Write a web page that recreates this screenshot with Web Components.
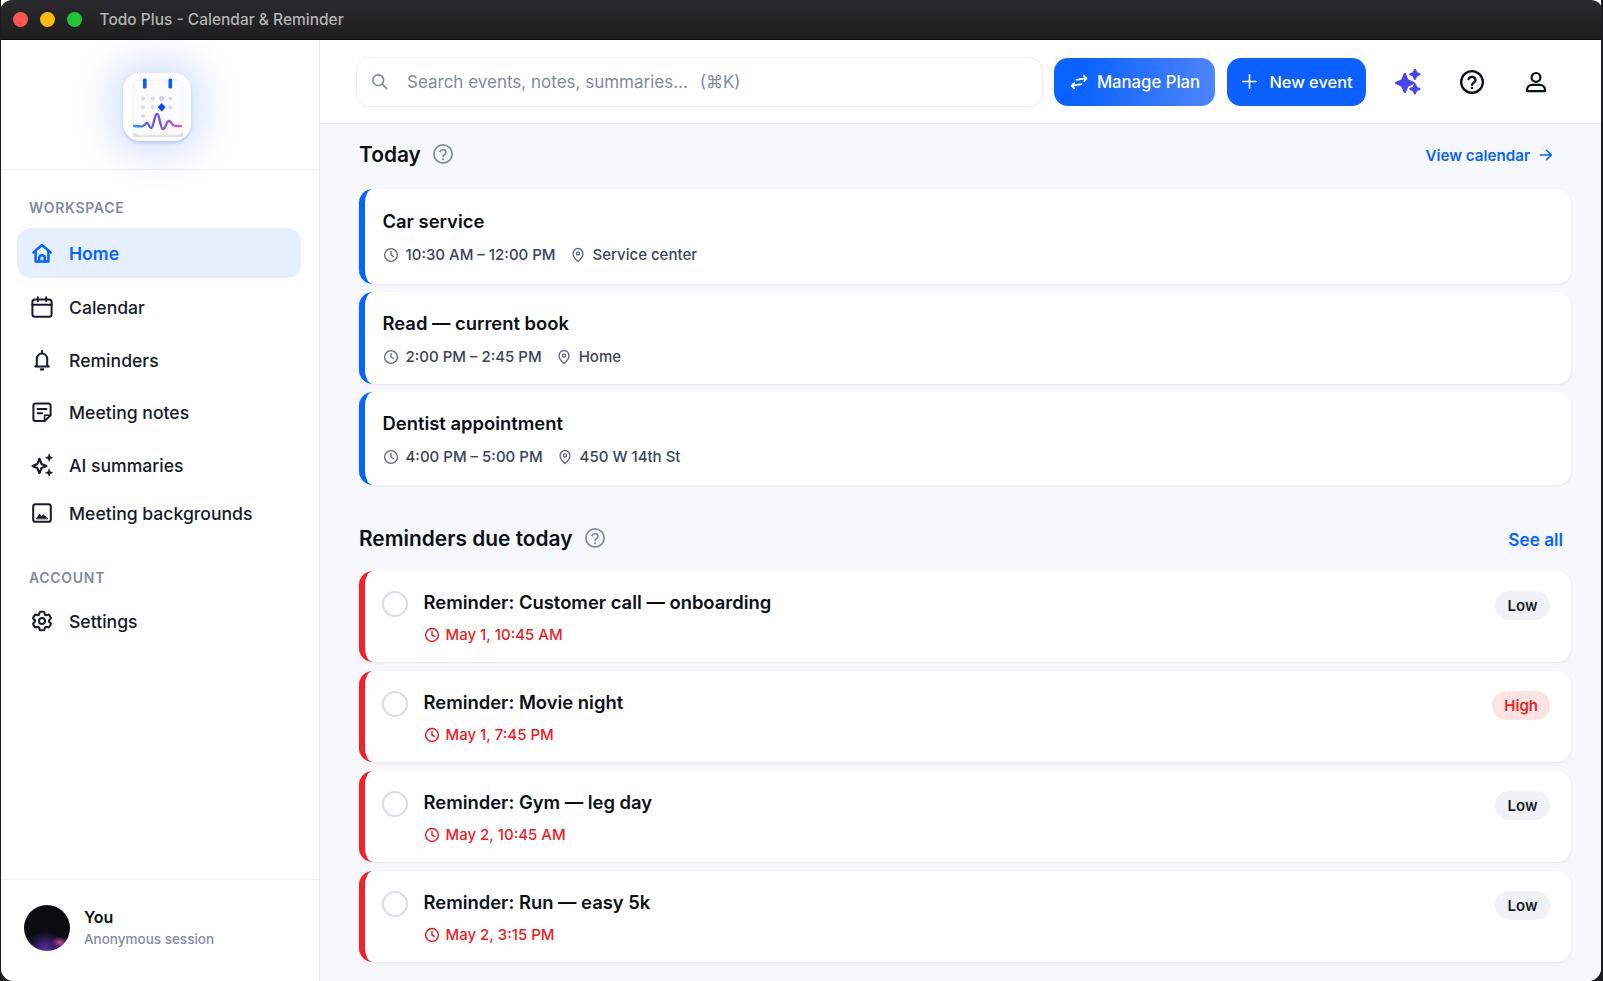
<!DOCTYPE html>
<html><head><meta charset="utf-8"><title>Todo Plus</title>
<style>
html,body{margin:0;padding:0;background:#1c1c1e;height:981px;overflow:hidden}
body{font-family:Inter,"Liberation Sans",sans-serif;-webkit-font-smoothing:antialiased}
</style></head><body>
<app-window>
  <title-bar slot="title">Todo Plus - Calendar &amp; Reminder</title-bar>
  <side-bar slot="side">
    <nav-label style="margin-top:29px">WORKSPACE</nav-label>
    <nav-item icon="home" active style="margin-top:11px">Home</nav-item>
    <nav-item icon="calendar" style="margin-top:5px">Calendar</nav-item>
    <nav-item icon="bell" style="margin-top:5px">Reminders</nav-item>
    <nav-item icon="note" style="margin-top:4px">Meeting notes</nav-item>
    <nav-item icon="spark" style="margin-top:5px">AI summaries</nav-item>
    <nav-item icon="image">Meeting backgrounds</nav-item>
    <nav-label style="margin-top:32px">ACCOUNT</nav-label>
    <nav-item icon="gear" style="margin-top:10px">Settings</nav-item>
  </side-bar>
  <top-bar slot="top"></top-bar>
  <main-content slot="main">
    <section-head link="View calendar" arrow style="margin-top:15px">Today</section-head>
    <event-card time="10:30 AM – 12:00 PM" place="Service center" style="margin-top:20px;height:95px;--p:20px">Car service</event-card>
    <event-card time="2:00 PM – 2:45 PM" place="Home" style="margin-top:8px;height:92px;--p:19px">Read — current book</event-card>
    <event-card time="4:00 PM – 5:00 PM" place="450 W 14th St" style="margin-top:8px;height:93px;--p:19px">Dentist appointment</event-card>
    <section-head link="See all" style="margin-top:38px">Reminders due today</section-head>
    <reminder-card when="May 1, 10:45 AM" level="Low" style="margin-top:18px">Reminder: Customer call — onboarding</reminder-card>
    <reminder-card when="May 1, 7:45 PM" level="High" style="margin-top:9px">Reminder: Movie night</reminder-card>
    <reminder-card when="May 2, 10:45 AM" level="Low" style="margin-top:9px">Reminder: Gym — leg day</reminder-card>
    <reminder-card when="May 2, 3:15 PM" level="Low" style="margin-top:9px">Reminder: Run — easy 5k</reminder-card>
  </main-content>
</app-window>
<script>
const ICONS={
home:'<g stroke-width="2.5"><path d="M3.4 11.4 12 4l8.6 7.4"/><path d="M5.6 9.8V20.4h12.8V9.8"/><path d="M9.2 20.4v-3.4a2.8 2.8 0 0 1 5.6 0v3.4"/></g>',
calendar:'<rect x="2.4" y="4.4" width="19.2" height="17.4" rx="2.6"/><path d="M2.4 9.8h19.2M7.8 2.2v4M16.2 2.2v4"/>',
bell:'<path d="M6.8 17.2v-6.4a5.2 5.2 0 0 1 10.4 0v6.4l1.6 1.4H5.2z"/><path d="M12 2.8v2.2"/><path d="M11 21.4h2" stroke-width="2.4"/>',
note:'<path d="M5.6 3.4h12.8a2.2 2.2 0 0 1 2.2 2.2v9.6l-6 5.8H5.6a2.2 2.2 0 0 1-2.2-2.2V5.6a2.2 2.2 0 0 1 2.2-2.2z"/><path d="M7.6 9h8.8M7.6 13.2h4.6"/><path d="M14.6 21v-5.8h6" stroke-width="1.6"/>',
spark:'<g transform="translate(-1 -1.2) scale(1.1)"><path d="M9.5 6.4 11.4 11l4.4 1.9-4.4 1.9-1.9 4.6-1.9-4.6-4.4-1.9L7.6 11z"/><path d="M18.3 2.2l.9 2.3 2.3.9-2.3.9-.9 2.3-.9-2.3-2.3-.9 2.3-.9zM18.3 15.8l.9 2.3 2.3.9-2.3.9-.9 2.3-.9-2.3-2.3-.9 2.3-.9z" fill="currentColor" stroke-width=".6"/></g>',
image:'<rect x="3.2" y="3.2" width="17.6" height="17.6" rx="2.4"/><path d="M6.4 17.6l3.2-4.4 2.2 2.4 1.6-1.8 4.2 3.8z" fill="currentColor" stroke-width=".8"/>',
gear:'<path transform="translate(-.4 -.4) scale(1.033)" d="M9.594 3.94c.09-.542.56-.94 1.11-.94h2.593c.55 0 1.02.398 1.11.94l.213 1.281c.063.374.313.686.645.87.074.04.147.083.22.127.325.196.72.257 1.075.124l1.217-.456a1.125 1.125 0 0 1 1.37.49l1.296 2.247a1.125 1.125 0 0 1-.26 1.431l-1.003.827c-.293.241-.438.613-.43.992a7.723 7.723 0 0 1 0 .255c-.008.378.137.75.43.991l1.004.827c.424.35.534.955.26 1.43l-1.298 2.247a1.125 1.125 0 0 1-1.369.491l-1.217-.456c-.355-.133-.75-.072-1.076.124a6.47 6.47 0 0 1-.22.128c-.331.183-.581.495-.644.869l-.213 1.281c-.09.543-.56.94-1.11.94h-2.594c-.55 0-1.019-.398-1.11-.94l-.213-1.281c-.062-.374-.312-.686-.644-.87a6.52 6.52 0 0 1-.22-.127c-.325-.196-.72-.257-1.076-.124l-1.217.456a1.125 1.125 0 0 1-1.369-.49l-1.297-2.247a1.125 1.125 0 0 1 .26-1.431l1.004-.827c.292-.24.437-.613.43-.991a6.932 6.932 0 0 1 0-.255c.007-.38-.138-.751-.43-.992l-1.004-.827a1.125 1.125 0 0 1-.26-1.43l1.297-2.247a1.125 1.125 0 0 1 1.37-.491l1.216.456c.356.133.751.072 1.076-.124.072-.044.146-.086.22-.128.332-.183.582-.495.644-.869l.214-1.28Z"/><circle cx="12" cy="12" r="3"/>',
help:'<circle cx="12" cy="12" r="10"/><path d="M8.8 9.4a3.3 3.3 0 0 1 6.4.9c0 2.2-3.2 2.6-3.2 4.4"/><circle cx="12" cy="17.6" r="1.1" fill="currentColor" stroke="none"/>',
clock:'<circle cx="12" cy="12" r="9.6"/><path d="M12 6.6V12l3.6 2.2"/>',
pin:'<path d="M12 21.8s7.4-6.6 7.4-12.2a7.4 7.4 0 0 0-14.8 0c0 5.6 7.4 12.2 7.4 12.2z"/><circle cx="12" cy="9.6" r="2.4"/>',
search:'<circle cx="10.4" cy="10.4" r="6.8"/><path d="M15.6 15.6 21 21"/>',
user:'<circle cx="12" cy="7.4" r="4.4"/><path d="M8 14.8h8a5 5 0 0 1 5 5v1.4H3v-1.4a5 5 0 0 1 5-5z"/>',
swap:'<path d="M9 9.4 21 7.4M17.6 4.4 21 7.4l-2.6 3.4M15 14.6 3 16.6M6.4 13.2 3 16.6l3.4 3"/>',
plus:'<path d="M12 3.6v16.8M3.6 12h16.8"/>',
arrow:'<path d="M3.6 12h16.4M13 5l7 7-7 7"/>',
magic:'<path d="M9.6 5.2 12 11l5.4 2.4L12 15.8l-2.4 5.6-2.4-5.6-5.4-2.4L7.2 11z" fill="currentColor"/><path d="M18.6 1.6l1.2 2.9 2.8 1.1-2.8 1.2-1.2 2.8-1.1-2.8-2.9-1.2 2.9-1.1zM18.6 14.6l1.2 2.9 2.8 1.1-2.8 1.2-1.2 2.8-1.1-2.8-2.9-1.2 2.9-1.1z" fill="currentColor"/>'
};
function def(name,css,html){
  customElements.define(name,class extends HTMLElement{
    connectedCallback(){
      if(this.shadowRoot)return;
      const r=this.attachShadow({mode:'open'});
      const a=n=>this.getAttribute(n)||'';
      r.innerHTML='<style>'+css+'</style>'+(typeof html==='function'?html(a,this):html);
    }
  });
}
def('ui-icon',
 ':host{display:inline-flex;flex:none;width:var(--s,20px);height:var(--s,20px);color:inherit}svg{width:100%;height:100%;display:block;fill:none;stroke:currentColor;stroke-width:var(--w,2);stroke-linecap:round;stroke-linejoin:round}',
 a=>`<svg viewBox="0 0 24 24">${ICONS[a('name')]||''}</svg>`);
def('app-window',
 `:host{display:grid;grid-template-columns:319px 1fr;grid-template-rows:40px 84px 1fr;width:1600px;margin-left:1px;height:981px;background:#fff;border-radius:0 0 13px 13px;overflow:hidden;position:relative;grid-template-areas:"t t" "s b" "s m"}
 ::slotted([slot=title]){grid-area:t}::slotted([slot=side]){grid-area:s}::slotted([slot=top]){grid-area:b}::slotted([slot=main]){grid-area:m}`,
 '<slot name="title"></slot><slot name="side"></slot><slot name="top"></slot><slot name="main"></slot>');
def('title-bar',
 `:host{display:flex;align-items:center;background:linear-gradient(#2a2a2c,#1e1e1f);color:#b4b4b4;font:500 15.5px Inter,sans-serif;margin-left:-1px;margin-right:-2px;border-bottom:1px solid #101010;box-sizing:border-box;border-radius:12px 12px 0 0}
 .l{display:flex;gap:12px;margin:0 18px 0 12.5px}.l i{width:15px;height:15px;border-radius:50%;display:block}`,
 '<div class="l"><i style="background:#ff5450"></i><i style="background:#fdbb0e"></i><i style="background:#1fc636"></i></div><slot></slot>');
def('app-logo',
 `:host{display:block;width:68px;height:68px;border-radius:17px;background:#fff;box-shadow:0 0 36px 12px rgba(70,120,255,.22),0 2px 3px rgba(60,90,200,.25)}svg{display:block;width:100%;height:100%}`,
 `<svg viewBox="0 0 68 68"><defs><linearGradient id="w" x1="0" x2="1"><stop offset="0" stop-color="#2f8cff"/><stop offset=".5" stop-color="#6d52d8"/><stop offset="1" stop-color="#d95bb5"/></linearGradient></defs>
 <rect x="10" y="59" width="50" height="5" rx="2.5" fill="#dedee6"/><rect x="10" y="7" width="50" height="55" rx="6" fill="#fbfbfd" stroke="#eeeef4" stroke-width=".8"/>
 <rect x="20" y="5.5" width="3.6" height="10" rx="1.2" fill="#0b5cf5"/><rect x="45.5" y="5.5" width="3.6" height="10" rx="1.2" fill="#0b5cf5"/>
 <g fill="#dcdce8"><circle cx="20" cy="25.6" r="2.1"/><circle cx="29.6" cy="25.6" r="2.1"/><circle cx="38.7" cy="25.6" r="2.6" fill="#d5d0e6"/><circle cx="47.3" cy="25.6" r="2.1"/><circle cx="20" cy="34.3" r="2.1"/><circle cx="29.6" cy="34.3" r="2.1"/><circle cx="47.3" cy="34.3" r="2.1" fill="#d5daf5"/><circle cx="20" cy="43" r="2.1"/></g>
 <path d="M38.7 31l3 3.3-3 3.3-3-3.3z" fill="#0b4fe8" stroke="#0b4fe8" stroke-width="1.4" stroke-linejoin="round"/>
 <path d="M11 53C15 53 18 54 20 53C22 52 23 50 24 50C26 50 26 55 28 55C31 55 31 41 34 41C37 41 37 56 40 56C43 56 43 48 46 48C48.5 48 49 53 52 53L58 53" fill="none" stroke="url(#w)" stroke-width="2.3" stroke-linecap="round" stroke-linejoin="round"/></svg>`);
def('side-bar',
 `:host{display:flex;flex-direction:column;background:#fff;border-right:1px solid #eceef5;box-sizing:border-box;min-height:0}
 .h{height:130px;box-sizing:border-box;padding-top:33px;border-bottom:1px solid #eef0f5;display:flex;justify-content:center;flex:none;padding-right:7px}
 .n{flex:1;display:flex;flex-direction:column;padding:0 18px 0 16px}
 .f{height:102px;box-sizing:border-box;border-top:1px solid #eef0f6;display:flex;align-items:flex-start;padding:25px 0 0 23px;gap:14px}
 .a{width:46px;height:46px;border-radius:50%;background:radial-gradient(ellipse 9px 6px at 78% 82%,#d0507a 0,rgba(130,50,140,.7) 55%,transparent 100%),radial-gradient(circle at 46% 100%,#5a31b0 0,transparent 38%),#0c0b12}
 .t{display:flex;flex-direction:column;padding-top:2px}.y{font:600 16px/20px Inter,sans-serif;color:#0b0f17}.s{font:500 13.5px/20px Inter,sans-serif;color:#7f8ba8;margin-top:2px}`,
 `<div class="h"><app-logo></app-logo></div><div class="n"><slot></slot></div><div class="f"><div class="a"></div><div class="t"><span class="y">You</span><span class="s">Anonymous session</span></div></div>`);
def('nav-label',
 ':host{display:block;font:600 14px/18px Inter,sans-serif;letter-spacing:.7px;color:#7f8ba3;padding-left:12px}','<slot></slot>');
def('nav-item',
 `:host{display:flex;align-items:center;height:48px;flex:none;border-radius:14px;padding-left:13px;gap:15px;color:#141b29;font:500 17.6px Inter,sans-serif;--s:24px}
 :host([active]){height:50px;background:#e6effd;color:#0b63ff;font-weight:600}`,
 a=>`<ui-icon name="${a('icon')}"></ui-icon><slot></slot>`);
def('top-bar',
 `:host{display:flex;align-items:center;background:#fff;border-bottom:1px solid #e9ecf3;box-sizing:border-box;padding:0 0 0 36px;--s:22px}
 .s{width:687px;height:50px;box-sizing:border-box;border:1px solid #eceef4;border-radius:14px;display:flex;align-items:center;padding-left:13px;gap:18px;color:#7f8ba3;font:400 17px Inter,sans-serif;--s:19px;box-shadow:0 1px 2px rgba(30,40,80,.03)}
 button{border:0;height:48px;border-radius:14px;color:#fff;font:500 16.7px Inter,sans-serif;display:flex;align-items:center;padding:0;margin:0;justify-content:center}
 .m{width:161px;margin-left:11px;background:linear-gradient(100deg,#0b63ff 20%,#4f86fa);--s:20px;gap:8px}.n{width:139px;margin-left:12px;background:#0b60ff;--s:19px;gap:10px;font-size:16.4px}
 .i{display:flex;justify-content:center;flex:none;width:64px}
 .k{margin-left:7px}`,
 `<div class="s"><ui-icon name="search"></ui-icon><span>Search events, notes, summaries...<span class="k"> (⌘K)</span></span></div>
 <button class="m"><ui-icon name="swap"></ui-icon>Manage Plan</button><button class="n"><ui-icon name="plus"></ui-icon>New event</button>
 <div class="i" style="margin-left:9px;width:65px;color:#4a45ee;--s:27px"><ui-icon name="magic"></ui-icon></div>
 <div class="i" style="color:#0b0f17;--s:26px;--w:2.1"><ui-icon name="help"></ui-icon></div>
 <div class="i" style="color:#0b0f17;--s:24px;--w:2.2"><ui-icon name="user"></ui-icon></div>`);
def('main-content',
 ':host{display:flex;flex-direction:column;background:#f7f8fb;padding:0 30px 0 39px;min-height:0;overflow:hidden}','<slot></slot>');
def('section-head',
 `:host{display:flex;align-items:center;height:30px;flex:none;font:600 20.9px Inter,sans-serif;color:#0b0f17}
 .q{margin-left:11px;color:#7f8ba3;--s:22px;--w:1.9;display:flex}.l{margin-left:auto;margin-right:8px;padding-top:2px;color:#0b63ff;font:600 17.2px Inter,sans-serif;display:flex;align-items:center;gap:9px;--s:16px;--w:2.4}
 :host([arrow]) .l{margin-right:17px;padding-top:2px;font-size:15.2px;gap:8px}`,
 (a,e)=>`<slot></slot><span class="q"><ui-icon name="help"></ui-icon></span><span class="l">${a('link')}${e.hasAttribute('arrow')?'<ui-icon name="arrow"></ui-icon>':''}</span>`);
const cardCss=`:host{display:flex;flex:none;box-sizing:border-box;border-radius:14px;background:#fff;box-shadow:0 1px 3px rgba(30,40,80,.08);overflow:hidden;position:relative;border-left:6px solid var(--c)}`;
def('event-card',
 cardCss+`:host{--c:#0b63ff;flex-direction:column;padding:var(--p,20px) 0 0 17.5px}
 .t{font:600 18.4px/24px Inter,sans-serif;color:#0b0f17}
 .m{display:flex;align-items:center;margin-top:12px;font:500 15px/20px Inter,sans-serif;color:#3a4558;--s:16px;--w:2}
 .m ui-icon{color:#5c6a82;margin-right:7px}.m span{margin-right:14px}`,
 a=>`<div class="t"><slot></slot></div><div class="m"><ui-icon name="clock"></ui-icon><span>${a('time')}</span><ui-icon name="pin"></ui-icon><span>${a('place')}</span></div>`);
def('reminder-card',
 cardCss+`:host{--c:#ef2229;height:91px;padding:19px 21px 0 17px;gap:15.5px}
 .c{width:26px;height:26px;box-sizing:border-box;border:2px solid #d9dde6;border-radius:50%;flex:none;margin-top:1px}
 .b{flex:1}.t{font:600 18.4px/24px Inter,sans-serif;color:#0b0f17}
 .m{display:flex;align-items:center;gap:6px;margin-top:11px;font:500 15px/20px Inter,sans-serif;color:#ef1c24;--s:16px;--w:2.2}
 .p{height:29px;padding:0 12.5px;border-radius:15px;display:flex;align-items:center;font:600 15px Inter,sans-serif;background:#f0f1f4;color:#141b29;margin-top:1px}
 .p.h{background:#fde3e4;color:#e81f28;padding:0 12px}`,
 a=>`<div class="c"></div><div class="b"><div class="t"><slot></slot></div><div class="m"><ui-icon name="clock"></ui-icon>${a('when')}</div></div><div class="p ${a('level')==='High'?'h':''}">${a('level')}</div>`);
</script>
</body></html>
